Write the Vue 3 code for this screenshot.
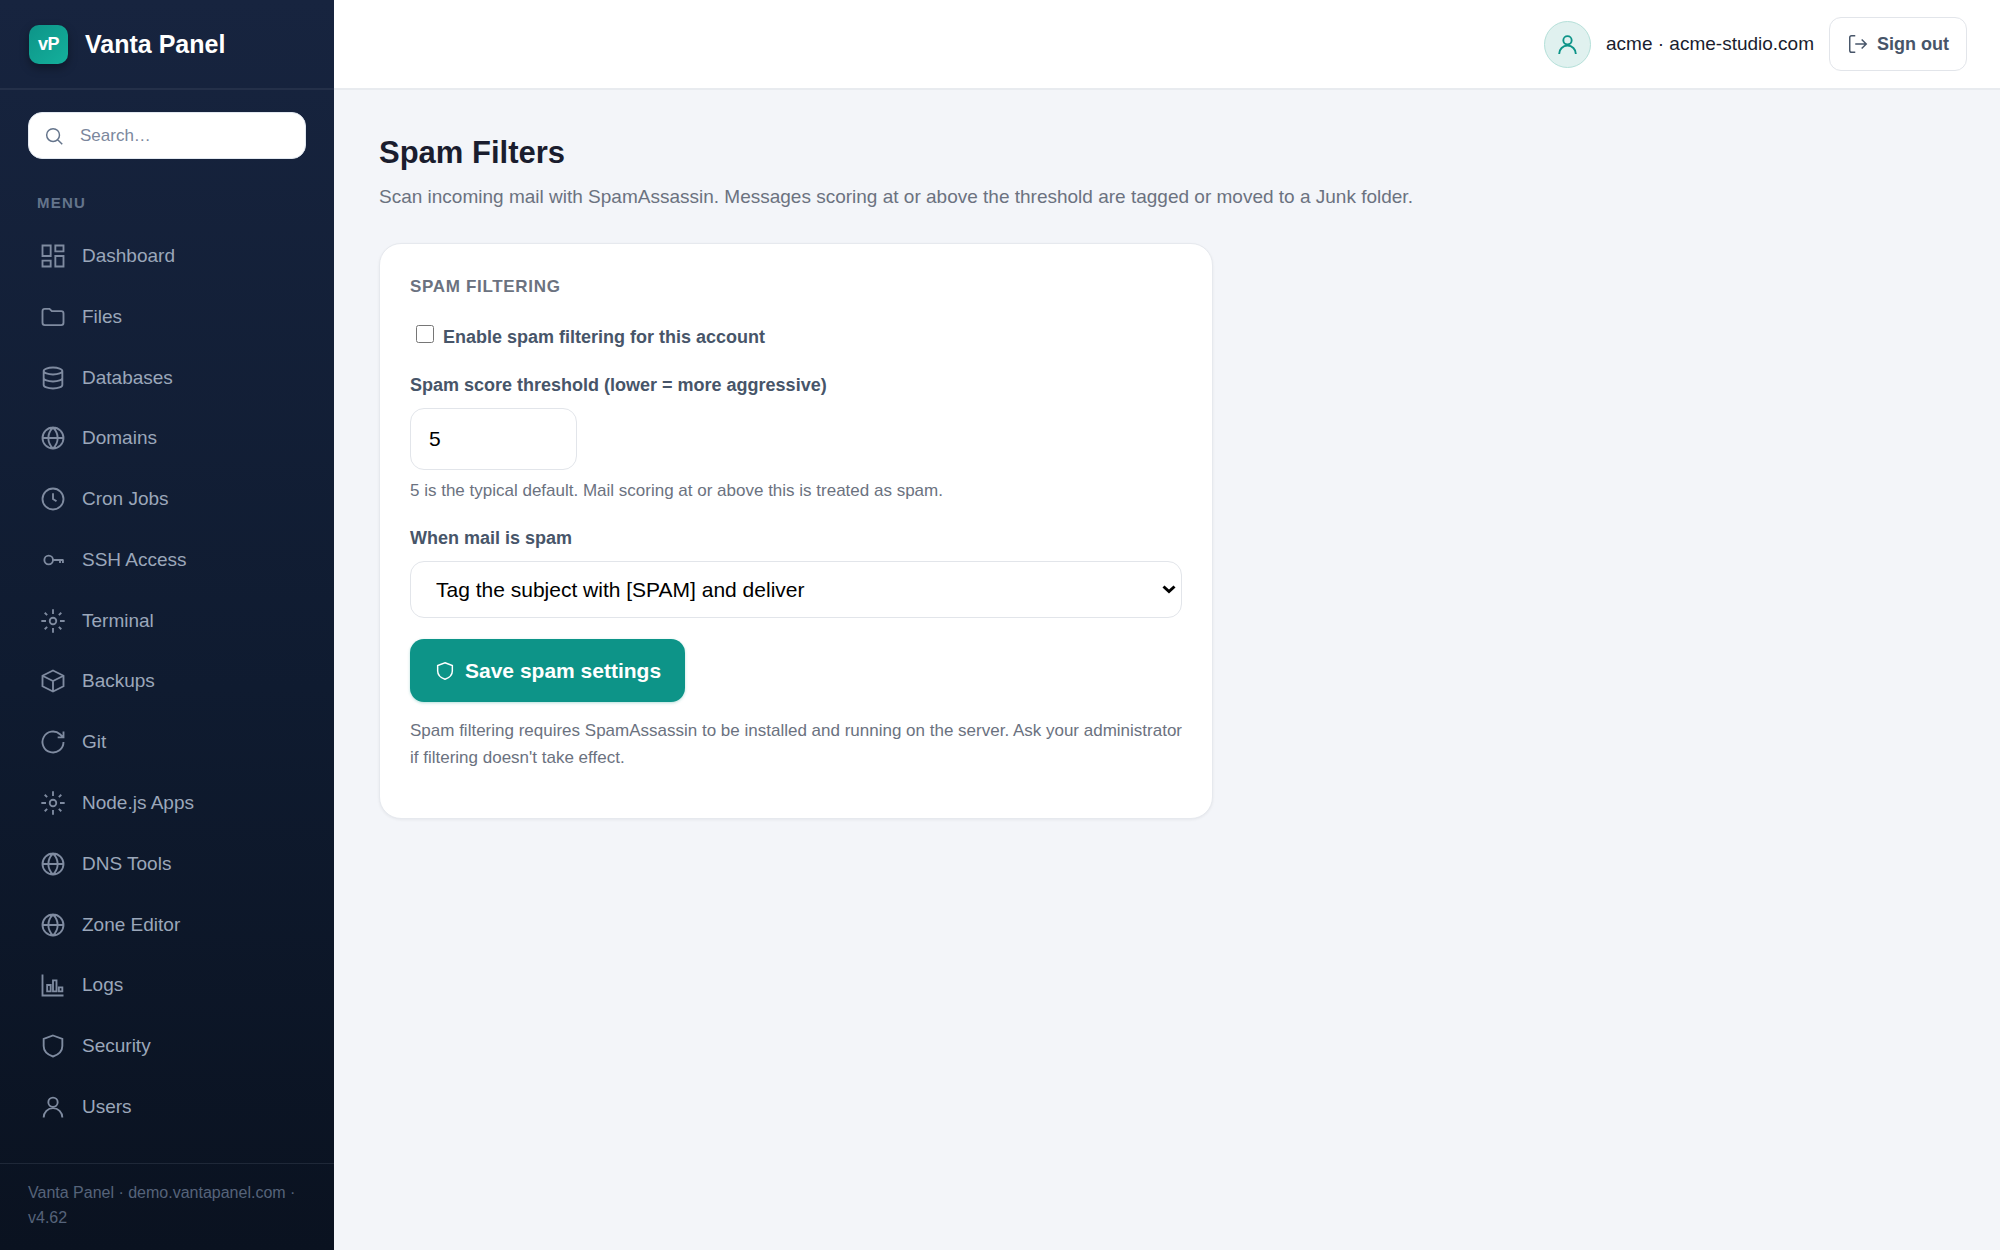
<template>
  <div class="layout">
    <aside class="sidebar">
      <div class="brand">
        <span class="logo">vP</span>
        <span class="brand-name">Vanta Panel</span>
      </div>

      <div class="search">
        <svg class="icon" viewBox="0 0 24 24"><path :d="icons.search" /></svg>
        <input v-model="search" type="search" placeholder="Search…" aria-label="Search" />
      </div>

      <div class="menu-label">MENU</div>
      <nav class="menu">
        <a v-for="item in filteredMenu" :key="item.label" class="menu-item" href="#">
          <svg class="icon" viewBox="0 0 24 24"><path :d="icons[item.icon]" /></svg>
          <span>{{ item.label }}</span>
        </a>
      </nav>

      <div class="sidebar-footer">Vanta Panel · demo.vantapanel.com · v4.62</div>
    </aside>

    <div class="content">
      <header class="topbar">
        <span class="avatar">
          <svg class="icon" viewBox="0 0 24 24"><path :d="icons.user" /></svg>
        </span>
        <span class="account">acme · acme-studio.com</span>
        <button class="signout" type="button">
          <svg class="icon" viewBox="0 0 24 24"><path :d="icons.signout" /></svg>
          Sign out
        </button>
      </header>

      <main class="page">
        <h1>Spam Filters</h1>
        <p class="subtitle">
          Scan incoming mail with SpamAssassin. Messages scoring at or above the threshold are tagged or moved to a Junk folder.
        </p>

        <form class="card" @submit.prevent="save">
          <h2>SPAM FILTERING</h2>

          <label class="check">
            <input v-model="settings.enabled" type="checkbox" />
            Enable spam filtering for this account
          </label>

          <div class="field">
            <label for="threshold">Spam score threshold (lower = more aggressive)</label>
            <input id="threshold" v-model="settings.threshold" class="control threshold" type="number" min="1" max="20" />
            <p class="help">5 is the typical default. Mail scoring at or above this is treated as spam.</p>
          </div>

          <div class="field">
            <label for="action">When mail is spam</label>
            <div class="select">
              <select id="action" v-model="settings.action" class="control">
                <option value="tag">Tag the subject with [SPAM] and deliver</option>
                <option value="junk">Move to the Junk folder</option>
              </select>
              <svg class="arrow" viewBox="0 0 14 9"><path d="M1.500 1.500L7 6.500l5.500-5" /></svg>
            </div>
          </div>

          <button class="save" type="submit">
            <svg class="icon" viewBox="0 0 24 24"><path :d="icons.shield" /></svg>
            Save spam settings
          </button>

          <p class="note">
            Spam filtering requires SpamAssassin to be installed and running on the server. Ask your administrator if filtering doesn't take effect.
          </p>
        </form>
      </main>
    </div>
  </div>
</template>

<script setup>
import { ref, reactive, computed } from 'vue';

const icons = {
  search: 'M4 11a7 7 0 1 0 14 0a7 7 0 1 0-14 0M16 16l5 5',
  dashboard: 'M3 3h7v9H3zM14 3h7v5h-7zM14 12h7v9h-7zM3 16h7v5H3z',
  folder: 'M3 7a2 2 0 0 1 2-2h4l2 2h8a2 2 0 0 1 2 2v8a2 2 0 0 1-2 2H5a2 2 0 0 1-2-2z',
  database: 'M4 6a8 3 0 1 0 16 0a8 3 0 1 0-16 0M4 6v12c0 1.7 3.6 3 8 3s8-1.3 8-3V6M4 12c0 1.7 3.6 3 8 3s8-1.3 8-3',
  globe: 'M3 12a9 9 0 1 0 18 0a9 9 0 1 0-18 0M3 12h18M12 3c2.5 2.5 4 5.5 4 9s-1.5 6.5-4 9c-2.5-2.5-4-5.5-4-9s1.5-6.5 4-9z',
  clock: 'M3 12a9 9 0 1 0 18 0a9 9 0 1 0-18 0M12 7v5l3 2',
  key: 'M4.6 12a3.7 3.7 0 1 0 7.4 0a3.7 3.7 0 1 0-7.4 0M12 12h9M18 12v2.5M20.5 12v2.5',
  gear: 'M9.2 12a2.8 2.8 0 1 0 5.6 0a2.8 2.8 0 1 0-5.6 0M12 2v4M12 18v4M2 12h4M18 12h4M4.9 4.9L7 7M17 17l2.1 2.1M4.9 19.1L7 17M17 7l2.1-2.1',
  box: 'M12 3l9 4.5v9L12 21l-9-4.5v-9zM3 7.5l9 4.5 9-4.5M12 12v9',
  refresh: 'M21 12a9 9 0 1 1-3-6.7L21 8M21 3v5h-5',
  chart: 'M3 3v18h18M7 12h3v5.5H7zM12 8h3v9.5h-3zM17 14h3v3.5h-3z',
  shield: 'M12 3l8 3v6c0 5-3.5 7.5-8 9-4.5-1.5-8-4-8-9V6z',
  user: 'M8 8a4 4 0 1 0 8 0a4 4 0 1 0-8 0M4 21a8 8 0 0 1 16 0',
  signout: 'M9 21H5a2 2 0 0 1-2-2V5a2 2 0 0 1 2-2h4M16 17l5-5-5-5M21 12H9',
};

const menu = [
  { label: 'Dashboard', icon: 'dashboard' },
  { label: 'Files', icon: 'folder' },
  { label: 'Databases', icon: 'database' },
  { label: 'Domains', icon: 'globe' },
  { label: 'Cron Jobs', icon: 'clock' },
  { label: 'SSH Access', icon: 'key' },
  { label: 'Terminal', icon: 'gear' },
  { label: 'Backups', icon: 'box' },
  { label: 'Git', icon: 'refresh' },
  { label: 'Node.js Apps', icon: 'gear' },
  { label: 'DNS Tools', icon: 'globe' },
  { label: 'Zone Editor', icon: 'globe' },
  { label: 'Logs', icon: 'chart' },
  { label: 'Security', icon: 'shield' },
  { label: 'Users', icon: 'user' },
];

const search = ref('');
const saved = ref(null);
const settings = reactive({
  enabled: false,
  threshold: 5,
  action: 'tag',
});

const filteredMenu = computed(() => {
  const term = search.value.trim().toLowerCase();
  return menu.filter((item) => item.label.toLowerCase().includes(term));
});

function save() {
  saved.value = { ...settings };
}
</script>

<style>
body {
  margin: 0;
  background: #f3f5f9;
}
</style>

<style scoped>
.layout {
  display: flex;
  min-height: 100vh;
  font-family: "Liberation Sans", Arial, sans-serif;
  color: #1a1d2e;
}

.layout * {
  box-sizing: border-box;
}

input,
select,
button {
  font-family: inherit;
}

.icon {
  width: 22px;
  height: 22px;
  flex-shrink: 0;
  fill: none;
  stroke: currentColor;
  stroke-width: 1.6;
}

/* sidebar */
.sidebar {
  display: flex;
  flex-direction: column;
  flex-shrink: 0;
  width: 334px;
  min-height: 100vh;
  background: linear-gradient(180deg, #17243f 0%, #0f1b30 55%, #0a1220 100%);
}

.brand {
  display: flex;
  align-items: center;
  gap: 17px;
  height: 90px;
  padding: 0 29px;
  border-bottom: 2px solid #243049;
}

.logo {
  display: flex;
  align-items: center;
  justify-content: center;
  width: 39px;
  height: 39px;
  border-radius: 10px;
  background: linear-gradient(135deg, #0d9488, #14b09c);
  box-shadow: 0 4px 10px rgba(0, 0, 0, 0.35);
  color: #fff;
  font-size: 18px;
  font-weight: 700;
  letter-spacing: -0.03em;
}

.brand-name {
  color: #fff;
  font-size: 25px;
  font-weight: 700;
}

.search {
  display: flex;
  align-items: center;
  gap: 15px;
  height: 47px;
  margin: 22px 28px 0;
  padding: 0 14px;
  border: 1px solid #e2e8f0;
  border-radius: 14px;
  background: #fff;
  color: #64748b;
}

.search input {
  width: 100%;
  min-width: 0;
  padding: 0;
  border: none;
  outline: none;
  background: none;
  color: #1a1d2e;
  font-size: 17px;
}

.search input::placeholder {
  color: #7b879d;
}

.menu-label {
  margin: 32px 37px 12px;
  color: #64748b;
  font-size: 15px;
  font-weight: 700;
  line-height: 24px;
  letter-spacing: 0.08em;
}

.menu {
  display: flex;
  flex: 1;
  flex-direction: column;
  justify-content: space-between;
  padding: 0 19px 27px;
}

.menu-item {
  display: flex;
  align-items: center;
  gap: 15px;
  height: 58px;
  padding: 0 20px;
  border-radius: 12px;
  color: #9ba7ba;
  font-size: 19px;
  text-decoration: none;
}

.menu-item:hover {
  background: rgba(255, 255, 255, 0.06);
}

.menu-item .icon {
  width: 28px;
  height: 28px;
  color: #7f8ba0;
}

.sidebar-footer {
  padding: 16px 28px 20px;
  border-top: 1px solid #1f2838;
  color: #56637a;
  font-size: 16px;
  line-height: 25px;
}

/* main column */
.content {
  flex: 1;
  min-width: 0;
}

.topbar {
  display: flex;
  align-items: center;
  justify-content: flex-end;
  gap: 15px;
  height: 90px;
  padding: 0 33px;
  border-bottom: 2px solid #e8ebef;
  background: #fff;
}

.avatar {
  display: flex;
  align-items: center;
  justify-content: center;
  width: 47px;
  height: 47px;
  border: 1px solid #b5e0d9;
  border-radius: 50%;
  background: #e0f1ef;
  color: #0d9488;
}

.avatar .icon {
  width: 25px;
  height: 25px;
  stroke-width: 1.8;
}

.account {
  font-size: 19px;
}

.signout {
  display: flex;
  align-items: center;
  gap: 8px;
  height: 54px;
  padding: 0 17px;
  border: 1px solid #e2e5ea;
  border-radius: 12px;
  background: #fff;
  color: #475569;
  font-size: 18px;
  font-weight: 700;
  cursor: pointer;
}

.page {
  padding: 44px 45px;
}

h1 {
  margin: 0 0 10px;
  font-size: 31px;
  line-height: 38px;
}

.subtitle {
  margin: 0 0 31px;
  color: #6b7280;
  font-size: 19px;
  line-height: 30px;
}

.card {
  max-width: 834px;
  padding: 30px;
  border: 1px solid #e6e9ee;
  border-radius: 22px;
  background: #fff;
  box-shadow: 0 1px 3px rgba(16, 24, 40, 0.06);
}

h2 {
  margin: 0 0 23px;
  color: #6b7280;
  font-size: 17px;
  line-height: 26px;
  letter-spacing: 0.04em;
}

.check,
.field label {
  display: block;
  color: #475569;
  font-size: 18px;
  font-weight: 700;
  line-height: 28px;
}

.check {
  height: 28px;
}

.check input {
  width: 18px;
  height: 18px;
  margin: 0 4px 0 6px;
  vertical-align: baseline;
}

.field {
  margin-top: 20px;
}

.control {
  display: block;
  width: 100%;
  height: 57px;
  margin-top: 9px;
  padding: 0 25px;
  border: 1px solid #e2e5ea;
  border-radius: 14px;
  background: #fff;
  color: #000;
  font-size: 21px;
  appearance: none;
}

.threshold {
  width: 167px;
  height: 62px;
  padding: 0 18px;
}

.select {
  position: relative;
}

.arrow {
  position: absolute;
  right: 6px;
  bottom: 24px;
  width: 14px;
  height: 9px;
  fill: none;
  stroke: #000;
  stroke-width: 3;
  pointer-events: none;
}

.help {
  margin: 7px 0 0;
  color: #6b7280;
  font-size: 17px;
  line-height: 27px;
}

.save {
  display: flex;
  align-items: center;
  gap: 9px;
  height: 63px;
  margin-top: 21px;
  padding: 0 24px;
  border: none;
  border-radius: 14px;
  background: #0d9488;
  box-shadow: 0 1px 3px rgba(13, 148, 136, 0.3);
  color: #fff;
  font-size: 21px;
  font-weight: 700;
  cursor: pointer;
}

.save:hover {
  background: #0f857b;
}

.note {
  margin: 15px 0 17px;
  color: #6b7280;
  font-size: 17px;
  line-height: 27px;
}
</style>
